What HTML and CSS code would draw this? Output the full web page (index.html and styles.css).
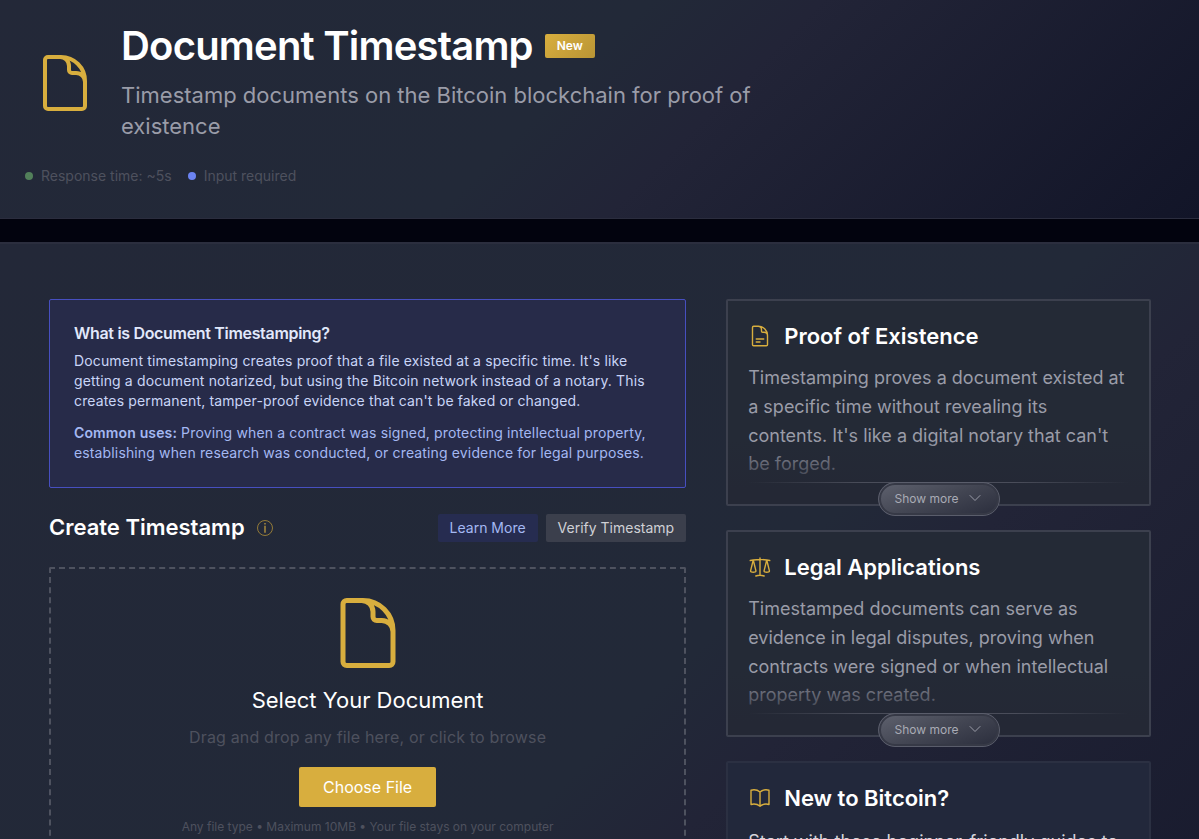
FILE: index.html
```html
<!DOCTYPE html>
<html lang="en">
<head>
<meta charset="utf-8">
<title>Document Timestamp</title>
<link rel="stylesheet" href="styles.css">
</head>
<body>
<svg class="defs" aria-hidden="true">
  <symbol id="i-doc" viewBox="0 0 24 24"><path d="M19.5 14.25v-2.625a3.375 3.375 0 0 0-3.375-3.375h-1.5A1.125 1.125 0 0 1 13.5 7.125v-1.5a3.375 3.375 0 0 0-3.375-3.375H8.25m2.25 0H5.625c-.621 0-1.125.504-1.125 1.125v17.25c0 .621.504 1.125 1.125 1.125h12.75c.621 0 1.125-.504 1.125-1.125V11.25a9 9 0 0 0-9-9Z"/></symbol>
  <symbol id="i-doctext" viewBox="0 0 24 24"><path d="M19.5 14.25v-2.625a3.375 3.375 0 0 0-3.375-3.375h-1.5A1.125 1.125 0 0 1 13.5 7.125v-1.5a3.375 3.375 0 0 0-3.375-3.375H8.25m0 12.75h7.5m-7.5 3H12M10.5 2.25H5.625c-.621 0-1.125.504-1.125 1.125v17.25c0 .621.504 1.125 1.125 1.125h12.75c.621 0 1.125-.504 1.125-1.125V11.25a9 9 0 0 0-9-9Z"/></symbol>
  <symbol id="i-scale" viewBox="0 0 24 24"><path d="M12 3v17.25m0 0c-1.472 0-2.882.265-4.185.75M12 20.25c1.472 0 2.882.265 4.185.75M18.75 4.97A48.416 48.416 0 0 0 12 4.5c-2.291 0-4.545.16-6.75.47m13.5 0c1.01.143 2.01.317 3 .52m-3-.52 2.62 10.726c.122.499-.106 1.028-.589 1.202a5.988 5.988 0 0 1-2.031.352 5.988 5.988 0 0 1-2.031-.352c-.483-.174-.711-.703-.59-1.202L18.75 4.971Zm-16.5.52c.99-.203 1.99-.377 3-.52m0 0 2.62 10.726c.122.499-.106 1.028-.589 1.202a5.989 5.989 0 0 1-2.031.352 5.989 5.989 0 0 1-2.031-.352c-.483-.174-.711-.703-.59-1.202L5.25 4.971Z"/></symbol>
  <symbol id="i-book" viewBox="0 0 24 24"><path d="M12 6.042A8.967 8.967 0 0 0 6 3.75c-1.052 0-2.062.18-3 .512v14.25A8.987 8.987 0 0 1 6 18c2.305 0 4.408.867 6 2.292m0-14.25a8.966 8.966 0 0 1 6-2.292c1.052 0 2.062.18 3 .512v14.25A8.987 8.987 0 0 0 18 18a8.967 8.967 0 0 0-6 2.292m0-14.25v14.25"/></symbol>
  <symbol id="i-chev" viewBox="0 0 24 24"><path d="m19.5 8.25-7.5 7.5-7.5-7.5"/></symbol>
</svg>

<header class="hero">
  <div class="hero-row">
    <svg class="icon hero-icon"><use href="#i-doc"/></svg>
    <div class="hero-text">
      <div class="title-row"><h1>Document Timestamp</h1><span class="badge">New</span></div>
      <p class="subtitle">Timestamp documents on the Bitcoin blockchain for proof of existence</p>
    </div>
  </div>
  <div class="meta">
    <span class="meta-item"><i class="dot green"></i>Response time: ~5s</span>
    <span class="meta-item"><i class="dot blue"></i>Input required</span>
  </div>
</header>

<main class="panel">
  <section class="primary">
    <div class="about">
      <h2>What is Document Timestamping?</h2>
      <p>Document timestamping creates proof that a file existed at a specific time. It's like getting a document notarized, but using the Bitcoin network instead of a notary. This creates permanent, tamper-proof evidence that can't be faked or changed.</p>
      <p class="uses"><strong>Common uses:</strong> Proving when a contract was signed, protecting intellectual property, establishing when research was conducted, or creating evidence for legal purposes.</p>
    </div>
    <div class="create-row">
      <h2>Create Timestamp</h2>
      <svg class="info" viewBox="0 0 16 16"><circle cx="8" cy="8" r="7.5"/><path class="stem" d="M8 5.8v7M8 3v1.4"/></svg>
      <div class="actions">
        <button class="btn learn">Learn More</button>
        <button class="btn verify">Verify Timestamp</button>
      </div>
    </div>
    <div class="drop">
      <svg class="icon drop-icon"><use href="#i-doc"/></svg>
      <h3>Select Your Document</h3>
      <p class="hint">Drag and drop any file here, or click to browse</p>
      <button class="choose">Choose File</button>
      <p class="note">Any file type • Maximum 10MB • Your file stays on your computer</p>
    </div>
  </section>
  <aside class="side">
    <article class="card">
      <div class="card-body">
        <h3><svg class="icon card-icon"><use href="#i-doctext"/></svg>Proof of Existence</h3>
        <p>Timestamping proves a document existed at a specific time without revealing its contents. It's like a digital notary that can't be forged.</p>
      </div>
      <div class="fade"></div>
      <button class="more">Show more<svg class="icon chev"><use href="#i-chev"/></svg></button>
    </article>
    <article class="card">
      <div class="card-body">
        <h3><svg class="icon card-icon"><use href="#i-scale"/></svg>Legal Applications</h3>
        <p>Timestamped documents can serve as evidence in legal disputes, proving when contracts were signed or when intellectual property was created.</p>
      </div>
      <div class="fade"></div>
      <button class="more">Show more<svg class="icon chev"><use href="#i-chev"/></svg></button>
    </article>
    <article class="card guide">
      <div class="card-body">
        <h3><svg class="icon card-icon"><use href="#i-book"/></svg>New to Bitcoin?</h3>
        <p>Start with these beginner-friendly guides to</p>
      </div>
    </article>
  </aside>
</main>
</body>
</html>
```
FILE: styles.css
```css
* { box-sizing: border-box; }
html, body { height: 839px; overflow: hidden; }
body {
  margin: 0;
  background: #02030e;
  color: #fff;
  font-family: Inter, "Liberation Sans", sans-serif;
  font-size: 16px;
  letter-spacing: 0;
}
h1, h2, h3, p { margin: 0; }
button { font: inherit; letter-spacing: inherit; border: 0; padding: 0; }
.defs { position: absolute; width: 0; height: 0; }
.icon { fill: none; stroke: #d8ae3e; stroke-width: 1.5; stroke-linecap: round; stroke-linejoin: round; flex: none; }

.hero {
  height: 219px;
  padding: 21px 25px 0;
  border-bottom: 1px solid #2b2d3e;
  background: linear-gradient(135deg, #232838 0%, #222938 46%, #222437 58%, #121528 100%);
}
.hero-row { display: flex; align-items: center; height: 124px; padding-left: 8px; gap: 24px; }
.hero-icon { width: 64px; height: 64px; }
.hero-text { width: 680px; padding-bottom: 2px; }
.title-row { display: flex; align-items: center; height: 48px; gap: 12px; }
h1 { font-size: 40px; font-weight: 600; line-height: 48px; letter-spacing: -0.8px; white-space: nowrap; }
.badge {
  height: 24px; width: 50px; text-align: center; border-radius: 2px;
  font-size: 12px; font-weight: 600; line-height: 24px;
  background: linear-gradient(135deg, #d8ae3e, #b99535);
}
.subtitle { margin-top: 10px; font-size: 22px; line-height: 31px; color: #9a9ca8; }
.meta { display: flex; gap: 16px; margin-top: 21px; font-size: 14px; line-height: 20px; color: #4e515e; }
.meta-item { display: flex; align-items: center; gap: 8px; }
.dot { width: 8px; height: 8px; border-radius: 50%; }
.green { background: #52805a; }
.blue { background: #6b83f2; }

.panel {
  display: grid;
  grid-template-columns: 3fr 2fr;
  gap: 40px;
  margin-top: 23px;
  height: 597px;
  padding: 55px 48px 0 49px;
  border-top: 2px solid #2b2e3e;
  background: linear-gradient(135deg, #232838 0, #222938 780px, #222437 900px, #121528 1600px);
  overflow: hidden;
}
.about {
  height: 189px; padding: 22px 24px;
  border: 1px solid #474fc0; border-radius: 2px;
  background: #272b49; color: #c9d5f7;
  font-size: 14px; line-height: 20px; letter-spacing: 0.14px;
}
.about h2 { font-size: 16px; font-weight: 600; line-height: 22px; letter-spacing: -0.32px; color: #e1e8fb; margin-bottom: 7px; }
.uses { margin-top: 12px; color: #a4b8f2; }
.uses strong { font-weight: 600; }
.create-row { display: flex; align-items: center; height: 28px; margin: 26px 0 25px; }
.create-row h2 { padding-bottom: 2px; font-size: 22px; font-weight: 600; line-height: 28px; }
.info { width: 16px; height: 16px; margin-left: 12px; fill: none; stroke: #b08f38; stroke-width: 0.8; }
.stem { stroke: #d8ae3e; stroke-width: 1.1; }
.actions { display: flex; gap: 8px; margin-left: auto; }
.btn { height: 28px; padding: 0 12px; border-radius: 2px; font-size: 14px; line-height: 28px; }
.learn { background: #262c50; color: #a4b8f2; }
.verify { background: #3b3f4c; color: #cfd0d5; }
.drop {
  display: flex; flex-direction: column; align-items: center;
  height: 400px; padding-top: 24px;
  border: 2px dashed #4e525f; border-radius: 2px;
}
.drop-icon { width: 80px; height: 80px; }
.drop h3 { margin-top: 12px; font-size: 22px; font-weight: 400; line-height: 30px; }
.hint { margin-top: 10px; font-size: 16px; line-height: 24px; letter-spacing: 0.16px; color: #4e515e; }
.choose { height: 40px; margin-top: 18px; padding: 0 24px; border-radius: 2px; background: #d8ae3e; color: #fff; font-size: 16px; }
.note { margin-top: 12px; font-size: 12px; line-height: 16px; color: #4e515e; }

.side { display: flex; flex-direction: column; gap: 24px; }
.card { position: relative; flex: none; height: 207px; border: 2px solid #3c404e; border-radius: 2px; background: #242a36; }
.card-body { padding: 20px 20px 0; }
.card h3 { display: flex; align-items: center; gap: 12px; height: 30px; font-size: 22px; font-weight: 600; }
.card-icon { width: 24px; height: 24px; stroke-width: 1.4; }
.card p { margin-top: 13px; font-size: 18px; line-height: 28.8px; color: #9a9ca8; }
.fade { position: absolute; left: 0; right: 0; bottom: 0; height: 64px; background: linear-gradient(to bottom, rgba(36, 40, 53, 0), #242835 80%); }
.fade::after {
  content: ""; position: absolute; left: 20px; right: 20px; top: 42px; height: 1px;
  background: linear-gradient(to right, transparent, #4a4d5a 30%, #4a4d5a 70%, transparent);
}
.more {
  position: absolute; left: 50%; bottom: -12px; transform: translateX(-50%);
  display: flex; align-items: center; justify-content: center; gap: 8px;
  width: 122px; height: 34px; padding-bottom: 2px; border: 1px solid #5a5d6b; border-radius: 17px;
  background: linear-gradient(160deg, #5c5f6c 5%, #434653 50%, #2a2d3c 100%);
  box-shadow: inset 0 0 0 2px #363946;
  color: #a9abb5; font-size: 12px;
}
.chev { width: 16px; height: 16px; stroke: #9a9ca8; }
.guide { height: 240px; border-color: #2b3042; background: #22283b; }
.guide p { margin-top: 15px; color: #d3d5db; }
```
